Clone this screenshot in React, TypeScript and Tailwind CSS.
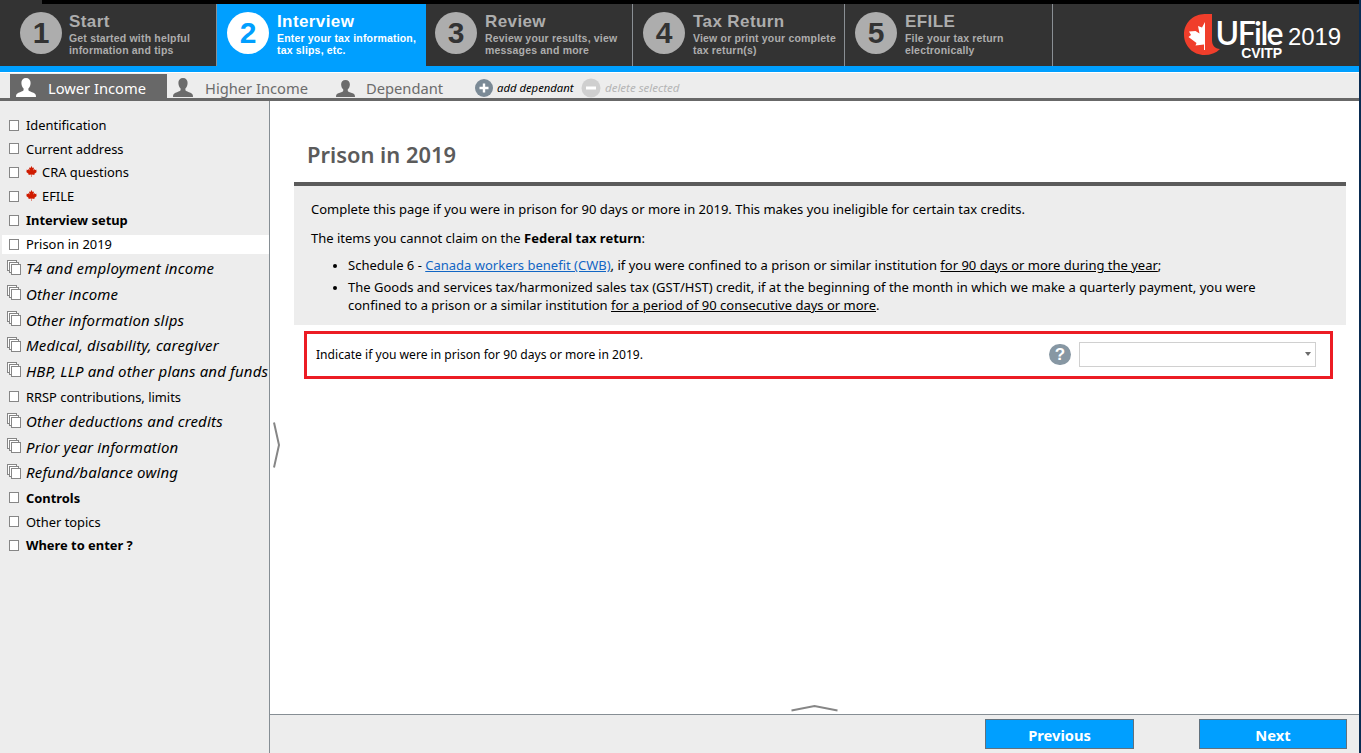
import React from "react";

const steps = [
  { n: "1", title: "Start", a: "Get started with helpful", b: "information and tips", box: "w-[217px] pl-[20px] border-r border-[#8a8f94]", gap: "ml-[7px]", on: false },
  { n: "2", title: "Interview", a: "Enter your tax information,", b: "tax slips, etc.", box: "w-[209px] pl-[10px]", gap: "ml-[8px]", on: true },
  { n: "3", title: "Review", a: "Review your results, view", b: "messages and more", box: "w-[207px] pl-[9px] border-r border-[#8a8f94]", gap: "ml-[8px]", on: false },
  { n: "4", title: "Tax Return", a: "View or print your complete", b: "tax return(s)", box: "w-[212px] pl-[10px] border-r border-[#8a8f94]", gap: "ml-[8px]", on: false },
  { n: "5", title: "EFILE", a: "File your tax return", b: "electronically", box: "w-[208px] pl-[10px] border-r border-[#8a8f94]", gap: "ml-[8px]", on: false },
];

type Item = { t: string; kind: "plain" | "bold" | "group"; h: string; leaf?: boolean; on?: boolean };
const items: Item[] = [
  { t: "Identification", kind: "plain", h: "h-[24px]" },
  { t: "Current address", kind: "plain", h: "h-[23px]" },
  { t: "CRA questions", kind: "plain", h: "h-[24px]", leaf: true },
  { t: "EFILE", kind: "plain", h: "h-[24px]", leaf: true },
  { t: "Interview setup", kind: "bold", h: "h-[24px]" },
  { t: "Prison in 2019", kind: "plain", h: "h-[24px]", on: true },
  { t: "T4 and employment income", kind: "group", h: "h-[25px]" },
  { t: "Other income", kind: "group", h: "h-[26px]" },
  { t: "Other information slips", kind: "group", h: "h-[26px]" },
  { t: "Medical, disability, caregiver", kind: "group", h: "h-[25px]" },
  { t: "HBP, LLP and other plans and funds", kind: "group", h: "h-[26px]" },
  { t: "RRSP contributions, limits", kind: "plain", h: "h-[25px]" },
  { t: "Other deductions and credits", kind: "group", h: "h-[25px]" },
  { t: "Prior year information", kind: "group", h: "h-[26px]" },
  { t: "Refund/balance owing", kind: "group", h: "h-[25px]" },
  { t: "Controls", kind: "bold", h: "h-[25px]" },
  { t: "Other topics", kind: "plain", h: "h-[23px]" },
  { t: "Where to enter ?", kind: "bold", h: "h-[24px]" },
];

const LEAF =
  "M12 0 L9.6 4.6 L6.6 3.2 L7.8 10 L4.6 6.8 L4 8.6 L0.6 8 L2 11.4 L0 12.6 L6 17.4 L5.2 19.6 L11.5 18.8 L11.5 24 L12.5 24 L12.5 18.8 L18.8 19.6 L18 17.4 L24 12.6 L22 11.4 L23.4 8 L20 8.6 L19.4 6.8 L16.2 10 L17.4 3.2 L14.4 4.6 Z";

function Leaf() {
  return (
    <svg className="mr-[5px] mb-[1px] h-[11px] w-[11px] shrink-0" viewBox="0 0 24 24">
      <path d={LEAF} fill="#cf1b00" />
    </svg>
  );
}

function Person({ cls }: { cls: string }) {
  return (
    <svg className={`shrink-0 ${cls}`} viewBox="0 0 20 19" preserveAspectRatio="none">
      <path
        fill="currentColor"
        d="M10 0C12.900 0 14.700 2 14.600 5C14.500 7.500 13.700 9.300 12.400 10.400V12.300C13 13.500 15.500 13.900 17.500 14.800C19.300 15.600 20 16.500 20 19H0C0 16.500 .7 15.600 2.500 14.800C4.500 13.900 7 13.500 7.600 12.300V10.400C6.300 9.300 5.500 7.500 5.400 5C5.300 2 7.100 0 10 0Z"
      />
    </svg>
  );
}

function Stack() {
  return (
    <svg className="mb-[3px] ml-[7px] h-[15px] w-[14px] shrink-0" viewBox="0 0 14 15">
      <g fill="#fff" stroke="#868686">
        <rect x=".5" y=".5" width="9" height="10" />
        <rect x="2.500" y="2.500" width="9" height="10" />
        <rect x="4.500" y="4.500" width="9" height="10" />
      </g>
    </svg>
  );
}

function Header() {
  return (
    <header className="shrink-0">
      <div className="h-[4px] bg-black">
        <div className="h-[4px] w-[42px] bg-[#333]" />
      </div>
      <div className="flex h-[62px] bg-[#333] font-['Liberation_Sans',sans-serif] font-bold">
        {steps.map((s) => (
          <div key={s.n} className={`flex shrink-0 pt-[8px] ${s.box} ${s.on ? "bg-[#009fff] text-white" : "text-[#adadad]"}`}>
            <div
              className={`flex h-[42px] w-[42px] shrink-0 items-center justify-center rounded-full text-[30px] leading-none ${
                s.on ? "bg-white text-[#009fff]" : "bg-[#adadad] text-[#333]"
              }`}
            >
              {s.n}
            </div>
            <div className={`whitespace-nowrap ${s.gap}`}>
              <div className="h-[20px] text-[17px] leading-[19px] tracking-[0.4px]">{s.title}</div>
              <div className="text-[10.500px] leading-[12px] tracking-[0.18px]">
                {s.a}
                <br />
                {s.b}
              </div>
            </div>
          </div>
        ))}
        <div className="ml-[131px] flex text-white">
          <svg className="mt-[9px] h-[43px] w-[36px] shrink-0" viewBox="0 0 36 43">
            <path d="M28 1H20.500C9 1.300 0 10 0 21.500C0 33 9 42 20.500 42C26.500 42 32 40 36 36C31 35.500 28 32.500 28 27Z" fill="#f03e2b" />
            <path d="M21 9L18 14.500L14 13L15.500 20.500L11.500 18L5 18.500L7 22L4.500 24L12.500 30L11.500 32.500L20 31.500V37H21Z" fill="#fff" />
          </svg>
          <div className="ml-[-6px] flex w-[68px] flex-col items-end">
            <div className="mt-[16px] h-[27px] text-[32px] leading-[26px] font-semibold tracking-[-1.600px] font-['Lato',sans-serif]">UFile</div>
            <div className="text-[14px] leading-[12px] tracking-[-0.1px]">CVITP</div>
          </div>
          <div className="ml-[6px] mt-[19px] text-[24px] leading-[28px] font-normal tracking-[-0.1px]">2019</div>
        </div>
      </div>
      <div className="h-[6px] bg-[#009fff]" />
      <div className="flex h-[29px] items-end border-t border-b-[3px] border-t-white border-b-[#686868] bg-[#ededed] text-[14.700px] whitespace-nowrap text-[#6b6b6b]">
        <div className="ml-[10px] flex h-[24px] w-[157px] items-end bg-[#686868] text-white">
          <Person cls="mb-[1px] ml-[6px] h-[19px] w-[20px]" />
          <span className="ml-[12px] leading-[20px]">Lower Income</span>
        </div>
        <Person cls="mb-[1px] ml-[6px] h-[19px] w-[20px]" />
        <span className="ml-[12px] w-[104px] leading-[20px]">Higher Income</span>
        <Person cls="mb-[1px] ml-[27px] h-[17px] w-[19px]" />
        <span className="ml-[11px] w-[78px] leading-[20px]">Dependant</span>
        <svg className="mb-[1px] ml-[31px] h-[18px] w-[18px]" viewBox="0 0 18 18">
          <circle cx="9" cy="9" r="9" fill="#7b8a96" />
          <path d="M9 4.500V13.500M4.500 9H13.500" stroke="#fff" strokeWidth="2.400" />
        </svg>
        <span className="ml-[4px] w-[78px] text-[11.300px] leading-[20px] text-black italic">add dependant</span>
        <svg className="ml-[6px] h-[20px] w-[20px]" viewBox="0 0 20 20">
          <circle cx="10" cy="10" r="9.500" fill="#cfcfcf" />
          <path d="M5 10H15" stroke="#fff" strokeWidth="3" />
        </svg>
        <span className="ml-[4px] text-[11.500px] leading-[20px] text-[#b5b5b5] italic">delete selected</span>
      </div>
    </header>
  );
}

function Sidebar() {
  return (
    <aside className="w-[270px] shrink-0 overflow-hidden border-r border-[#868e94] bg-[#ededed] pt-[12px] text-black">
      {items.map((it) => (
        <div key={it.t} className={`flex items-center whitespace-nowrap ${it.h}`}>
          <div className={`flex w-full items-center ${it.on ? "ml-[2px] h-[19px] bg-white" : ""}`}>
            {it.kind === "group" ? (
              <Stack />
            ) : (
              <span className={`h-[11px] w-[10px] shrink-0 border border-[#868686] bg-white ${it.on ? "ml-[7px]" : "ml-[9px]"}`} />
            )}
            <span
              className={`flex items-center ${
                it.kind === "group"
                  ? "mb-[1px] ml-[5px] text-[15px] leading-[22px] tracking-[0.160px] italic"
                  : it.kind === "bold"
                    ? "ml-[7px] text-[12.900px] leading-[18px] font-bold"
                    : "ml-[7px] text-[12.900px] leading-[18px]"
              }`}
            >
              {it.leaf && <Leaf />}
              {it.t}
            </span>
          </div>
        </div>
      ))}
    </aside>
  );
}

export default function App() {
  return (
    <div className="flex h-[753px] w-[1361px] bg-[#0a2c52] font-['Noto_Sans','Open_Sans',sans-serif]">
      <div className="flex w-[1359px] flex-col overflow-hidden bg-white">
        <Header />
        <div className="flex min-h-0 flex-1">
          <Sidebar />
          <div className="flex flex-1 flex-col">
            <main className="flex min-h-0 flex-1">
              <svg className="mt-[321px] ml-[3px] h-[46px] w-[8px] shrink-0" viewBox="0 0 8 46">
                <path d="M1 .5L6 23L1 45.500" fill="none" stroke="#868686" strokeWidth="2" />
              </svg>
              <div className="ml-[13px] flex w-[1052px] flex-col">
                <h1 className="mt-[39px] h-[42px] pl-[13px] text-[21.900px] leading-[30px] font-semibold text-[#5b5b5b]">Prison in 2019</h1>
                <section className="h-[143px] border-t-4 border-[#5b5b5b] bg-[#ededed] pt-[14px] pl-[17px] text-[13px] leading-[18px] whitespace-nowrap text-black">
                  <p>Complete this page if you were in prison for 90 days or more in 2019. This makes you ineligible for certain tax credits.</p>
                  <p className="mt-[11px]">
                    The items you cannot claim on the <b>Federal tax return</b>:
                  </p>
                  <ul className="mt-[9px] list-disc pl-[37px] marker:text-[11px]">
                    <li>
                      Schedule 6 - <a className="text-[#1266c4] underline">Canada workers benefit (CWB)</a>, if you were confined to a prison or similar institution <u>for 90 days or more during the year</u>;
                    </li>
                    <li className="mt-[4px]">
                      The Goods and services tax/harmonized sales tax (GST/HST) credit, if at the beginning of the month in which we make a quarterly payment, you were
                      <br />
                      confined to a prison or a similar institution <u>for a period of 90 consecutive days or more</u>.
                    </li>
                  </ul>
                </section>
                <section className="mt-[6px] ml-[10px] flex h-[48px] w-[1029px] items-center border-[3px] border-[#ec1c24] pb-[2px] pl-[9px] text-black">
                  <span className="w-[733px] pt-[2px] text-[12.100px]">Indicate if you were in prison for 90 days or more in 2019.</span>
                  <span className="flex h-[21px] w-[22px] items-center justify-center rounded-full bg-[#8797a3] text-[17px] leading-none font-bold text-white font-['Liberation_Sans',sans-serif]">?</span>
                  <span className="ml-[8px] flex h-[25px] w-[237px] items-center justify-end border border-[#d0d0d0] pr-[4px]">
                    <svg className="h-[4px] w-[6px]" viewBox="0 0 6 4">
                      <path d="M0 0H6L3 4Z" fill="#6b6b6b" />
                    </svg>
                  </span>
                </section>
                <svg className="mt-auto mb-[2px] ml-[497px] h-[7px] w-[47px]" viewBox="0 0 47 7">
                  <path d="M.5 5.500L23.500 1L46.500 5.500" fill="none" stroke="#868686" strokeWidth="1.800" />
                </svg>
              </div>
            </main>
            <footer className="flex h-[39px] shrink-0 justify-end border-t border-[#868e94] bg-[#ededed] pt-[4px] pr-[12px] text-[14.700px] font-bold text-white">
              <button className="h-[30px] w-[149px] border border-[#61717d] bg-[#009fff] pt-[2px]">Previous</button>
              <button className="ml-[65px] h-[30px] w-[148px] border border-[#61717d] bg-[#009fff] pt-[2px]">Next</button>
            </footer>
          </div>
        </div>
      </div>
    </div>
  );
}
